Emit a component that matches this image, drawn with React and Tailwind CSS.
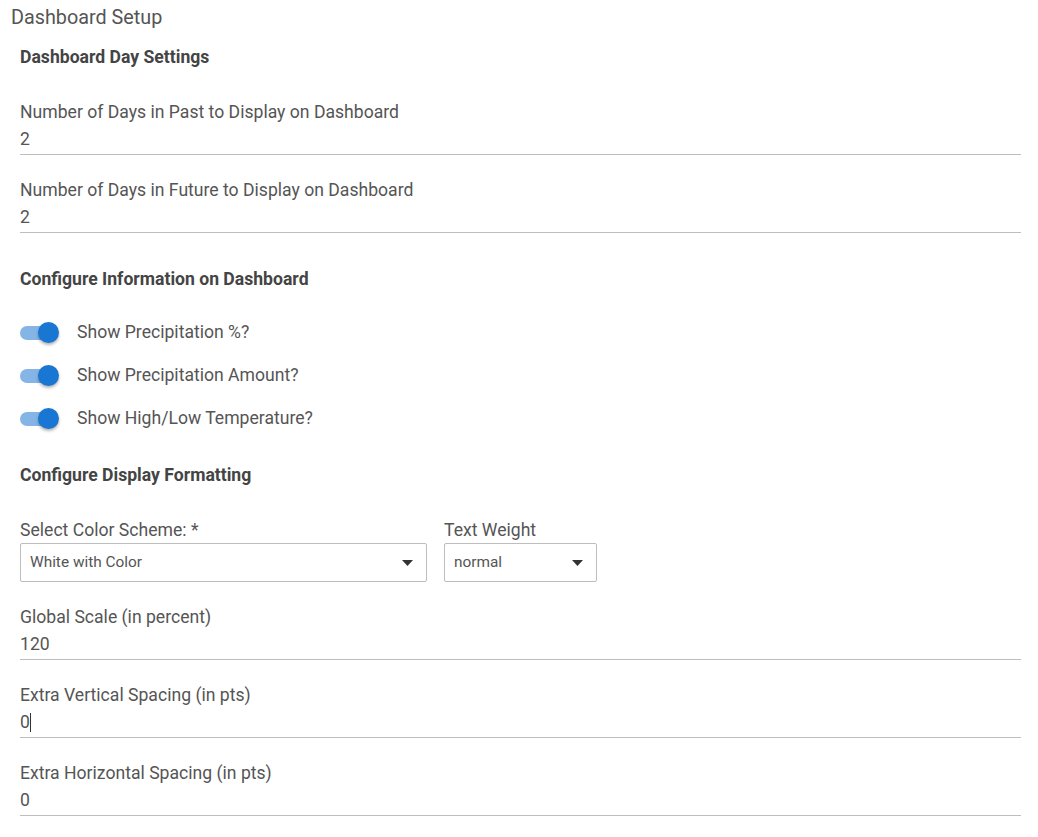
import { useState } from 'react';

const FONT = { fontFamily: 'Roboto, "Noto Sans", Arial, sans-serif' };

function Heading({ children, className = '' }) {
  return <div className={`text-[17.6px] leading-[26px] font-bold text-[#444] ${className}`}>{children}</div>;
}

function TextField({ label, value, caret, className = '' }) {
  return (
    <div className={`border-b border-[#bdbdbd] pb-[2px] ${className}`}>
      <div className="text-[17.6px] leading-[26px] text-[#555]">{label}</div>
      <div className="text-[17.6px] leading-[26px] text-[#555] mt-[1px] flex items-center">
        {value}
        {caret && <span className="inline-block w-px h-[19px] bg-[#333]"></span>}
      </div>
    </div>
  );
}

function Toggle({ label }) {
  const [on, setOn] = useState(true);
  return (
    <div className="flex items-center h-[43px] cursor-pointer" onClick={() => setOn(!on)}>
      <div className="relative w-[39px] h-[21px] flex items-center">
        <div className={`w-[37px] h-[14px] rounded-full ${on ? 'bg-[#85b5e6]' : 'bg-[#bbb]'}`}></div>
        <div
          className={`absolute top-0 w-[21px] h-[21px] rounded-full shadow-[0_2px_3px_rgba(0,0,0,0.3)] ${on ? 'left-[18px] bg-[#1976d2]' : 'left-0 bg-white'}`}
        ></div>
      </div>
      <span className="ml-[18px] text-[17.6px] text-[#555]">{label}</span>
    </div>
  );
}

function Select({ label, value, className = '' }) {
  return (
    <div className={className}>
      <div className="text-[17.6px] leading-[22px] text-[#555]">{label}</div>
      <div className="mt-[2px] h-[39px] border border-[#bdbdbd] rounded-[2px] flex items-center justify-between pl-[9px] pr-[13px]">
        <span className="text-[15.4px] text-[#555]">{value}</span>
        <svg width="11" height="6" viewBox="0 0 11 6">
          <path d="M0 0 L11 0 L5.5 6 Z" fill="#333" />
        </svg>
      </div>
    </div>
  );
}

export default function App() {
  return (
    <div className="bg-white w-[1038px] h-[837px] overflow-hidden" style={FONT}>
      <div className="pl-[11px] pt-[5px] text-[19.8px] leading-[26px] text-[#555]">Dashboard Setup</div>
      <div className="pl-[20px] w-[1021px]">
        <Heading className="mt-[13px]">Dashboard Day Settings</Heading>

        <TextField label="Number of Days in Past to Display on Dashboard" value="2" className="mt-[29px]" />
        <TextField label="Number of Days in Future to Display on Dashboard" value="2" className="mt-[22px]" />

        <Heading className="mt-[33px]">Configure Information on Dashboard</Heading>
        <div className="mt-[19px]">
          <Toggle label="Show Precipitation %?" />
          <Toggle label="Show Precipitation Amount?" />
          <Toggle label="Show High/Low Temperature?" />
        </div>

        <Heading className="mt-[22px]">Configure Display Formatting</Heading>
        <div className="flex gap-[17px] mt-[31px]">
          <Select label="Select Color Scheme: *" value="White with Color" className="w-[407px]" />
          <Select label="Text Weight" value="normal" className="w-[153px]" />
        </div>

        <TextField label="Global Scale (in percent)" value="120" className="mt-[22px]" />
        <TextField label="Extra Vertical Spacing (in pts)" value="0" caret className="mt-[22px]" />
        <TextField label="Extra Horizontal Spacing (in pts)" value="0" className="mt-[22px]" />
      </div>
    </div>
  );
}
